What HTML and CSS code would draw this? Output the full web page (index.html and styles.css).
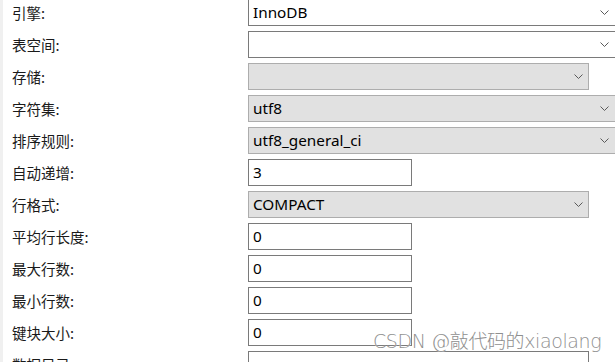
FILE: index.html
```html
<!DOCTYPE html>
<html lang="zh-CN">
<head>
<meta charset="utf-8">
<title>选项</title>
<link rel="stylesheet" href="styles.css">
</head>
<body>
<div class="page">
  <div class="form">
    <div class="row">
      <span class="lbl">引擎:</span>
      <div class="field combo edit full"><span class="val">InnoDB</span><svg class="chev" viewBox="0 0 9 5" width="9" height="5"><path d="M0.5 0.5 L4.5 4.5 L8.5 0.5"/></svg></div>
    </div>
    <div class="row">
      <span class="lbl">表空间:</span>
      <div class="field combo edit full"><span class="val"></span><svg class="chev" viewBox="0 0 9 5" width="9" height="5"><path d="M0.5 0.5 L4.5 4.5 L8.5 0.5"/></svg></div>
    </div>
    <div class="row">
      <span class="lbl">存储:</span>
      <div class="field combo list narrow"><span class="val"></span><svg class="chev" viewBox="0 0 9 5" width="9" height="5"><path d="M0.5 0.5 L4.5 4.5 L8.5 0.5"/></svg></div>
    </div>
    <div class="row">
      <span class="lbl">字符集:</span>
      <div class="field combo list full"><span class="val">utf8</span><svg class="chev" viewBox="0 0 9 5" width="9" height="5"><path d="M0.5 0.5 L4.5 4.5 L8.5 0.5"/></svg></div>
    </div>
    <div class="row">
      <span class="lbl">排序规则:</span>
      <div class="field combo list full"><span class="val">utf8_general_ci</span><svg class="chev" viewBox="0 0 9 5" width="9" height="5"><path d="M0.5 0.5 L4.5 4.5 L8.5 0.5"/></svg></div>
    </div>
    <div class="row">
      <span class="lbl">自动递增:</span>
      <div class="field text"><span class="val">3</span></div>
    </div>
    <div class="row">
      <span class="lbl">行格式:</span>
      <div class="field combo list narrow"><span class="val">COMPACT</span><svg class="chev" viewBox="0 0 9 5" width="9" height="5"><path d="M0.5 0.5 L4.5 4.5 L8.5 0.5"/></svg></div>
    </div>
    <div class="row">
      <span class="lbl">平均行长度:</span>
      <div class="field text"><span class="val">0</span></div>
    </div>
    <div class="row">
      <span class="lbl">最大行数:</span>
      <div class="field text"><span class="val">0</span></div>
    </div>
    <div class="row">
      <span class="lbl">最小行数:</span>
      <div class="field text"><span class="val">0</span></div>
    </div>
    <div class="row">
      <span class="lbl">键块大小:</span>
      <div class="field text"><span class="val">0</span></div>
    </div>
    <div class="row">
      <span class="lbl">数据目录:</span>
      <div class="field text dir"><span class="val"></span></div>
    </div>
  </div>
  <div class="watermark">CSDN @敲代码的xiaolang</div>
</div>
</body>
</html>
```
FILE: styles.css
```css
html, body {
  margin: 0;
  padding: 0;
  width: 615px;
  height: 362px;
  overflow: hidden;
  background: #ffffff;
}

.page {
  position: relative;
  width: 612px;
  height: 362px;
  border-left: 3px solid #f0f0f0;
  overflow: hidden;
}

.form {
  display: flex;
  flex-direction: column;
  gap: 5px;
  margin-top: -1px;
}

.row {
  display: flex;
  align-items: center;
  height: 27px;
}

.lbl {
  flex: none;
  width: 236px;
  padding-left: 9px;
  font-family: "Noto Sans CJK SC", "Noto Sans", sans-serif;
  font-size: 14.5px;
  color: #1a1a1a;
  line-height: 27px;
}

.field {
  flex: none;
  box-sizing: border-box;
  height: 27px;
  display: flex;
  align-items: center;
  justify-content: space-between;
  padding-left: 4px;
  border: 1px solid #7a7a7a;
  background: #ffffff;
  font-family: "Noto Sans", "Open Sans", sans-serif;
  font-size: 15.3px;
  color: #000000;
}

.val {
  white-space: nowrap;
  line-height: 25px;
}

.full {
  width: 368px;
  padding-right: 6px;
}

.narrow {
  width: 341px;
  padding-right: 5px;
}

.list {
  background: #e1e1e1;
  border-color: #adadad;
}

.text {
  width: 164px;
}

.dir {
  width: 341px;
}

.chev {
  flex: none;
  fill: none;
  stroke: #5a5a5a;
  stroke-width: 1;
}

.watermark {
  position: absolute;
  left: 370px;
  top: 326px;
  font-family: "DejaVu Sans", "Noto Sans CJK SC", sans-serif;
  font-weight: 200;
  font-size: 19px;
  color: #8f8f8f;
  letter-spacing: -0.4px;
  white-space: nowrap;
  text-shadow: 0 0 1px #ffffff;
}
```
